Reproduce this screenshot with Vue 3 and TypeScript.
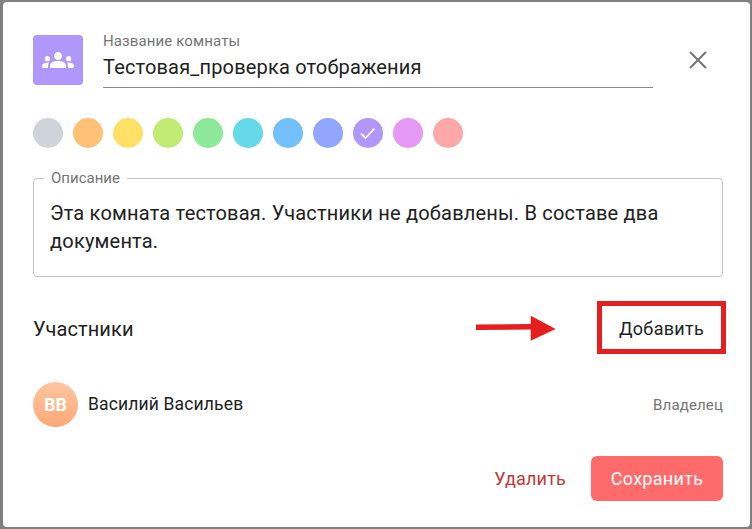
<script setup lang="ts">
const colors: string[] = ['#ced4da','#ffc078','#ffe066','#c0eb75','#8ce99a','#66d9e8','#74c0fc','#91a7ff','#b197fc','#e599f7','#ffa8a8']
const selected = 8
</script>

<template>
  <div class="backdrop">
    <div class="dialog">
      <header class="head">
        <div class="room-icon">
          <svg width="32" height="32" viewBox="0 0 24 24" fill="#fff"><path d="M12 12.75c1.63 0 3.07.39 4.24.9 1.08.48 1.76 1.56 1.76 2.73V18H6v-1.61c0-1.18.68-2.26 1.76-2.73 1.17-.52 2.61-.91 4.24-.91zM4 13c1.1 0 2-.9 2-2s-.9-2-2-2-2 .9-2 2 .9 2 2 2zm1.13 1.1c-.37-.06-.74-.1-1.13-.1-.99 0-1.93.21-2.78.58C.48 14.9 0 15.62 0 16.43V18h4.5v-1.61c0-.83.23-1.61.63-2.29zM20 13c1.1 0 2-.9 2-2s-.9-2-2-2-2 .9-2 2 .9 2 2 2zm4 3.43c0-.81-.48-1.53-1.22-1.85-.85-.37-1.79-.58-2.78-.58-.39 0-.76.04-1.13.1.4.68.63 1.46.63 2.29V18H24v-1.57zM12 6c1.66 0 3 1.34 3 3s-1.34 3-3 3-3-1.34-3-3 1.34-3 3-3z"/></svg>
        </div>
        <div class="name-field">
          <label class="name-label">Название комнаты</label>
          <div class="name-value">Тестовая_проверка отображения</div>
        </div>
        <button class="close" aria-label="Закрыть">
          <svg width="18" height="18" viewBox="0 0 18 18" fill="none" stroke="#757575" stroke-width="2"><path d="M1 1l16 16M17 1L1 17"/></svg>
        </button>
      </header>

      <div class="swatches">
        <span v-for="(c, i) in colors" :key="c" class="swatch" :style="{ background: c }">
          <svg v-if="i === selected" width="16" height="16" viewBox="0 0 16 16" fill="none" stroke="#fff" stroke-width="1.8"><path d="M1 8.5l4.5 4.5 9-9.5"/></svg>
        </span>
      </div>

      <fieldset class="desc">
        <legend>Описание</legend>
        <p>Эта комната тестовая. Участники не добавлены. В составе два документа.</p>
      </fieldset>

      <div class="members-head">
        <span class="members-title">Участники</span>
        <button class="add">Добавить</button>
        <svg class="arrow" width="82" height="28" viewBox="0 0 82 28" fill="#e51f1f"><path d="M1 9.5L56 9v5.5L1 15z"/><path d="M55.7 .7L80.7 14 55.7 25.7z"/></svg>
        <span class="mark"></span>
      </div>

      <div class="member">
        <span class="avatar">ВВ</span>
        <span class="member-name">Василий Васильев</span>
        <span class="role">Владелец</span>
      </div>

      <footer class="foot">
        <button class="delete">Удалить</button>
        <button class="save">Сохранить</button>
      </footer>
    </div>
  </div>
</template>

<style>
html, body { margin: 0; background: #808080; }
</style>

<style scoped>
.backdrop {
  width: 752px;
  height: 529px;
  box-sizing: border-box;
  padding: 2px 2px 2px 3px;
  background: #808080;
  font-family: Roboto, "Noto Sans", sans-serif;
  color: #212121;
  overflow: hidden;
}
.dialog {
  height: 525px;
  box-sizing: border-box;
  background: #fff;
  border-radius: 4px;
  padding: 33px 27px 0 30px;
  display: flex;
  flex-direction: column;
}
.head { display: flex; align-items: flex-start; }
.room-icon {
  width: 50px;
  height: 50px;
  border-radius: 4px;
  background: #b197fc;
  display: flex;
  align-items: center;
  justify-content: center;
  flex: none;
}
.name-field {
  width: 550px;
  margin: -1px 0 0 20px;
  border-bottom: 1px solid #8a8a8a;
  height: 54px;
  box-sizing: border-box;
}
.name-label { display: block; font-size: 15px; line-height: 15px; color: #757575; letter-spacing: .12px; }
.name-value { font-size: 20px; line-height: 24px; margin-top: 6px; letter-spacing: .17px; }
.close {
  margin: 16px 0 0 36px;
  width: 18px;
  height: 18px;
  padding: 0;
  border: 0;
  background: none;
  display: block;
}
.close svg { display: block; }
.swatches { display: flex; gap: 10px; margin-top: 30px; }
.swatch {
  width: 30px;
  height: 30px;
  border-radius: 50%;
  display: flex;
  align-items: center;
  justify-content: center;
}
.desc {
  margin: 22px 0 0;
  padding: 0 16px;
  min-width: 0;
  height: 107px;
  box-sizing: border-box;
  border: 1px solid #c4c4c4;
  border-radius: 4px;
}
.desc legend { font-size: 15px; line-height: 16px; color: #757575; padding: 0 7px; margin-left: -6px; }
.desc p { margin: 13px 0 0; font-size: 20px; line-height: 28px; letter-spacing: .2px; }
.members-head {
  position: relative;
  display: flex;
  align-items: center;
  justify-content: space-between;
  margin-top: 26px;
  height: 50px;
}
.members-title { font-size: 20px; letter-spacing: .1px; padding-top: 2px; }
.add {
  border: 0;
  background: none;
  padding: 0;
  width: 125px;
  height: 50px;
  margin-right: -1px;
  font: inherit;
  font-size: 18px;
  color: #212121;
  letter-spacing: .3px;
}
.arrow { position: absolute; left: 442px; top: 12px; }
.mark {
  position: absolute;
  right: -3px;
  top: -2px;
  width: 129px;
  height: 53px;
  box-sizing: border-box;
  border: 5px solid #e51f1f;
}
.member { display: flex; align-items: center; margin-top: 29px; height: 45px; }
.avatar {
  width: 45px;
  height: 45px;
  border-radius: 50%;
  background: linear-gradient(#ffc6a0, #fda876);
  color: #fff;
  font-size: 18px;
  font-weight: 700;
  display: flex;
  align-items: center;
  justify-content: center;
}
.member-name { margin-left: 10px; font-size: 17.5px; letter-spacing: .15px; padding-bottom: 2px; }
.role { margin-left: auto; font-size: 15px; color: #757575; letter-spacing: .15px; }
.foot { display: flex; justify-content: flex-end; align-items: center; margin-top: 29px; }
.delete {
  border: 0;
  background: none;
  padding: 0;
  font: inherit;
  font-size: 18px;
  color: #c03a3a;
  margin-right: 25px;
  letter-spacing: .2px;
}
.save {
  border: 0;
  width: 132px;
  height: 45px;
  border-radius: 6px;
  background: #ff6b6b;
  color: #fff;
  font: inherit;
  font-size: 18px;
  letter-spacing: .3px;
}
</style>
